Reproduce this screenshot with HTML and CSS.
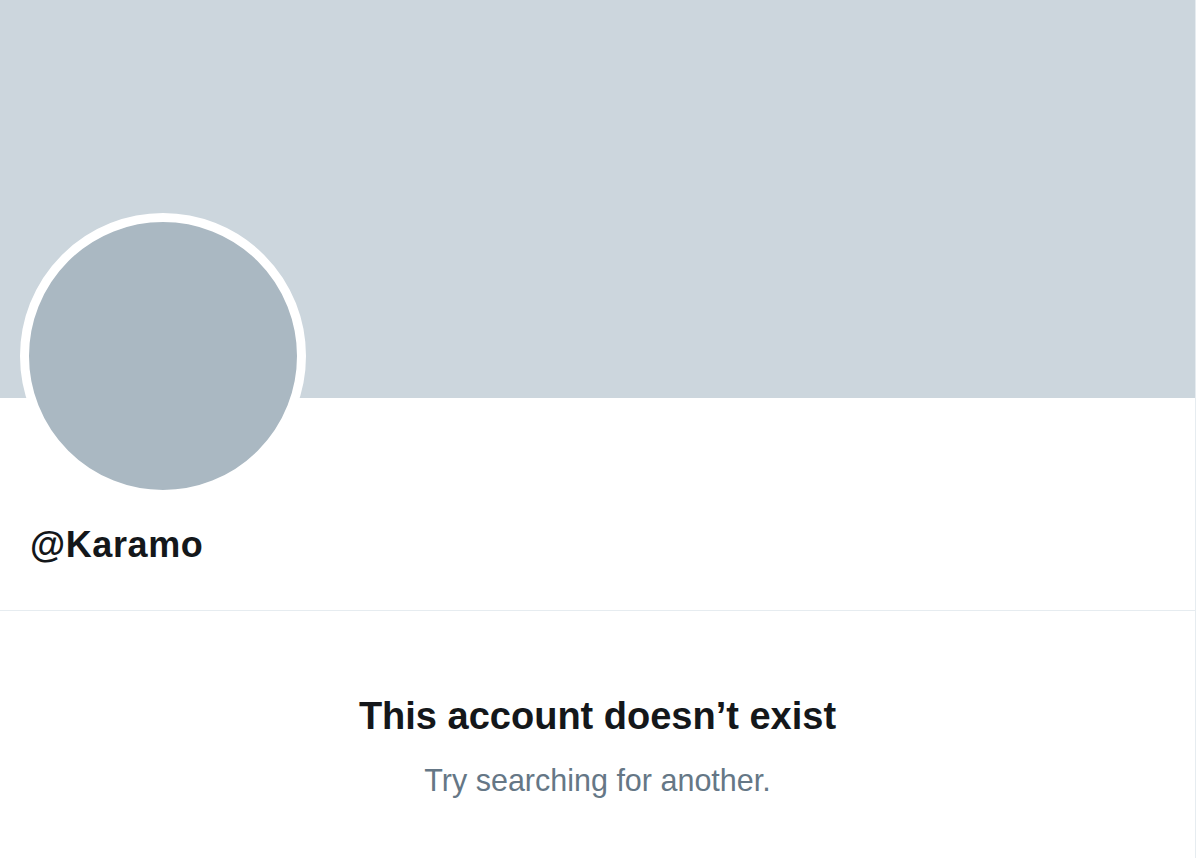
FILE: index.html
```html
<!doctype html>
<html lang="en">
    <head>
        <meta charset="UTF-8" />
        <meta name="viewport" content="width=device-width, initial-scale=1.0" />
        <title>@Karamo</title>
        <link rel="stylesheet" href="styles.css">
    </head>
    <body>
        <div class="profile">
            <div class="banner"></div>

            <div class="profile-header">
                <div class="avatar"></div>
                <h1 class="screen-name">@Karamo</h1>
            </div>

            <div class="empty-state">
                <h2>This account doesn’t exist</h2>
                <p>Try searching for another.</p>
            </div>
        </div>
    </body>
</html>
```

FILE: styles.css
```css
body {
    margin: 0;
    font-family: 'Liberation Sans', Arial, sans-serif;
    background: #fff;
    color: #14171a;
}

.profile {
    width: 1195px;
    min-height: 858px;
    border-right: 1px solid #e6ecf0;
}

.banner {
    height: 398px;
    background: #ccd6dd;
}

.profile-header {
    padding: 0 0 45px 20px;
    border-bottom: 1px solid #e6ecf0;
}

.avatar {
    width: 268px;
    height: 268px;
    margin-top: -185px;
    border: 9px solid #fff;
    border-radius: 50%;
    background: #aab8c2;
}

.screen-name {
    margin: 25px 0 0 10px;
    font-size: 36px;
    line-height: 41px;
    font-weight: bold;
    letter-spacing: 0.6px;
}

.empty-state {
    padding-top: 82px;
    text-align: center;
}

.empty-state h2 {
    margin: 0;
    font-size: 38px;
    line-height: 46px;
    font-weight: bold;
}

.empty-state p {
    margin: 23px 0 0;
    font-size: 30.5px;
    line-height: 36px;
    color: #657786;
}
```
